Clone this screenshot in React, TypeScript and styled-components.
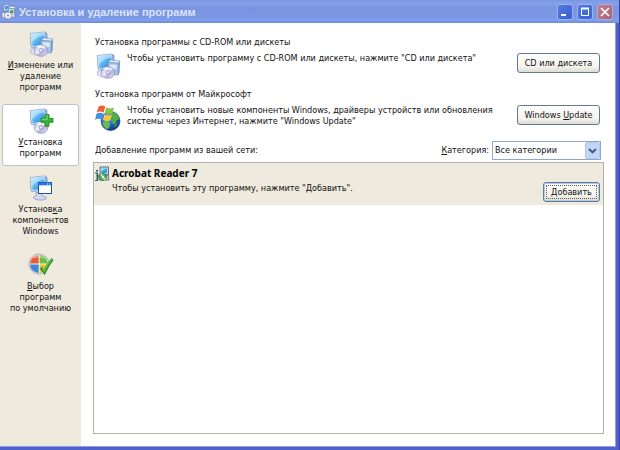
import React from "react";
import styled, { createGlobalStyle, css } from "styled-components";

const Global = createGlobalStyle`
  *, *::before, *::after { box-sizing: border-box; }
  html, body, #root { height: 100%; }
  body {
    margin: 0;
    background: #fff;
    color: #111;
    font: 9px/11px "DejaVu Sans Condensed", Tahoma, "DejaVu Sans", sans-serif;
  }
  button, select { font: inherit; color: inherit; }
  h1, h2, h3, p { margin: 0; font: inherit; }
  svg { display: block; flex: none; }
`;

const Window = styled.div`
  display: flex;
  flex-direction: column;
  height: 100%;
  background: #4f5fcb;
  border-right: 1px solid #3f3fa8;
`;

const TitleBar = styled.header`
  display: flex;
  align-items: center;
  gap: 3px;
  height: 23px;
  flex: none;
  padding: 0 6px 0 1px;
  background: linear-gradient(#7c96e0 0, #84a0ea 3px, #7a94e0 8px, #7b97e4 17px, #819fee 20px, #6f89d6 23px);
`;

const Title = styled.h1`
  flex: 1;
  color: #dbe5fb;
  font: bold 11px/16px "Liberation Sans", Arial, sans-serif;
  white-space: nowrap;
`;

const Controls = styled.div`
  display: flex;
  gap: 4px;
`;

const ControlButton = styled.button<{ $close?: boolean }>`
  display: grid;
  place-items: center;
  width: 16px;
  height: 16px;
  padding: 0;
  border: 1px solid ${(p) => (p.$close ? "#b9aad4" : "#9db4ef")};
  border-radius: 3px;
  background: ${(p) =>
    p.$close ? "linear-gradient(135deg, #bd8090, #a76273)" : "linear-gradient(135deg, #5579dc, #3560d6)"};
`;

const Body = styled.div`
  display: flex;
  flex: 1;
  min-height: 0;
  margin: 0 3px 3px 0;
  border: solid #8f9de2;
  border-width: 0 1px 1px 0;
  background: #fff;
`;

const Sidebar = styled.nav`
  display: flex;
  flex-direction: column;
  gap: 5px;
  width: 81px;
  flex: none;
  padding: 4px 2px;
  background: #eeeade;
`;

const NavButton = styled.button<{ $active?: boolean }>`
  display: flex;
  flex-direction: column;
  align-items: center;
  gap: 3px;
  min-height: 62px;
  padding: 3px 0 5px;
  border: 1px solid transparent;
  border-radius: 3px;
  background: none;
  white-space: pre-line;
  ${(p) =>
    p.$active &&
    css`
      border-color: #b9c4cf;
      background: #fff;
    `}
`;

const Content = styled.main`
  display: flex;
  flex-direction: column;
  flex: 1;
  min-width: 0;
  padding: 14px 11px 12px 12px;
`;

const Source = styled.section`
  display: flex;
  flex-direction: column;
  gap: 5px;
  min-height: 52px;
  padding: 0 4px 0 2px;
`;

const SourceRow = styled.div`
  display: flex;
  align-items: flex-start;
  gap: 6px;
`;

const SourceText = styled.p`
  flex: 1;
  white-space: pre-line;
`;

const PushButton = styled.button<{ $focused?: boolean }>`
  height: 20px;
  padding: 0 5px;
  border: 1px solid #5f7b95;
  border-radius: 3px;
  background: linear-gradient(#fff, #f4f3ee 70%, #dedbd0);
  white-space: nowrap;
  ${(p) =>
    p.$focused
      ? css`
          min-width: 57px;
          box-shadow: inset 0 0 0 1px #b5caec;
          outline: 1px dotted #5c5c5c;
          outline-offset: -4px;
        `
      : css`
          min-width: 83px;
        `}
`;

const Filter = styled.div`
  display: flex;
  align-items: center;
  gap: 3px;
  height: 19px;
  margin-bottom: 2px;
  padding: 0 3px 0 2px;
`;

const FilterTitle = styled.h2`
  flex: 1;
`;

const SelectBox = styled.div`
  display: grid;
  width: 109px;
  height: 19px;

  & > * {
    grid-area: 1 / 1;
  }
  & > svg {
    place-self: center end;
    margin-right: 1px;
    pointer-events: none;
  }
`;

const Select = styled.select`
  appearance: none;
  width: 100%;
  padding: 0 16px 0 2px;
  border: 1px solid #8fa9c8;
  border-radius: 0;
  background: #fff;
`;

const ProgramList = styled.ul`
  flex: 1;
  margin: 0;
  padding: 0;
  border: 1px solid #b4b1a8;
  list-style: none;
`;

const Program = styled.li`
  display: flex;
  align-items: flex-start;
  gap: 2px;
  min-height: 42px;
  padding: 3px 3px 3px 1px;
  background: #eeeade;
`;

const ProgramInfo = styled.div`
  display: flex;
  flex-direction: column;
  flex: 1;
  gap: 3px;
`;

const ProgramName = styled.h3`
  color: #000;
  font: bold 10px/14px "Noto Sans", Tahoma, sans-serif;
`;

const ProgramAction = styled.div`
  align-self: flex-end;
  display: flex;
`;

const Gradients = () => (
  <svg width="0" height="0" aria-hidden="true">
    <defs>
      <linearGradient id="screen" x1="0" y1="0" x2="1" y2="1">
        <stop offset="0" stopColor="#b9edff" />
        <stop offset=".5" stopColor="#59b2ee" />
        <stop offset="1" stopColor="#2d76cf" />
      </linearGradient>
      <linearGradient id="disc" x1="0" y1="0" x2="1" y2="1">
        <stop offset="0" stopColor="#9daee2" />
        <stop offset=".45" stopColor="#f3f1fc" />
        <stop offset=".6" stopColor="#b9b1e0" />
        <stop offset="1" stopColor="#e6e9fa" />
      </linearGradient>
      <radialGradient id="ocean" cx=".35" cy=".3" r=".8">
        <stop offset="0" stopColor="#62b7f2" />
        <stop offset=".5" stopColor="#2468c4" />
        <stop offset="1" stopColor="#0c3277" />
      </radialGradient>
    </defs>
  </svg>
);

const Monitor = () => (
  <>
    <path d="M2 2.5 17 .8l2.300 1.300.9 12.600-16 2.200L2.600 15z" fill="#8aa5ce" />
    <path d="M2 2.500 17 .8l.9 13.500L3.500 16.500z" fill="#d9e9f8" stroke="#7e9cc6" strokeWidth=".5" />
    <path d="M3.300 3.600 16.200 2.100l.7 11.200-12.400 2z" fill="url(#screen)" />
    <path d="M3.300 3.600 16.200 2.100l.2 2.600C10.500 5 7 8 3.900 11.500z" fill="#d5f5ff" opacity=".5" />
  </>
);

const Disc = () => (
  <>
    <ellipse cx="13" cy="19.500" rx="6.800" ry="5.800" fill="url(#disc)" stroke="#8387b8" strokeWidth=".7" />
    <path d="M13 19.500 8 15.500q2-1.700 5-1.700z" fill="#fff" opacity=".7" />
    <circle cx="13" cy="19.300" r="2" fill="#c8c9e8" stroke="#8c8dbd" strokeWidth=".6" />
    <circle cx="13" cy="19.300" r=".8" fill="#fff" />
  </>
);

const SetupIcon = () => (
  <svg width="26" height="26" viewBox="0 0 26 26" aria-hidden="true">
    <Monitor />
    <path d="m2.500 18.500 4.500-1.500 4 2.500-3.500 5-5-3z" fill="#dfe5f3" stroke="#8d9cc0" strokeWidth=".6" />
    <path d="m13 9.500 2.500-2.500 9.500 1-1.500 2.200z" fill="#e7f2fc" stroke="#6d8fc4" strokeWidth=".6" />
    <path d="m13 9.500 10.500.7-.4 11.800-10-1z" fill="#a9c6ea" stroke="#6283bb" strokeWidth=".6" />
    <path d="m23.500 10.200 1.500-2.200-.5 11.500-1.400 2.500z" fill="#6f92c8" />
    <path d="m15 11.500 6.500.5v4l-6.500-.4z" fill="#dfeefb" />
    <Disc />
  </svg>
);

const TitleIcon = () => (
  <svg width="15" height="17" viewBox="0 0 15 17" aria-hidden="true">
    <path d="M2 2.500 7.500 1l1 6L3 8z" fill="#e9f4fb" stroke="#557aa8" strokeWidth=".6" />
    <path d="m3.200 3.300 3.800-.9.5 3.600-3.700.8z" fill="#4aa0dc" />
    <path d="m7.500 5 2-2 5 1-1 2z" fill="#f8fbff" stroke="#56739f" strokeWidth=".5" />
    <path d="m7.500 5 6 1 .5 8.500-7-1z" fill="#d8e5ee" stroke="#56739f" strokeWidth=".6" />
    <path d="m9 7 3.500.6v3L9 10z" fill="#4e9a72" />
    <path d="M1 9.500h4l1 3-3 2.500-2-1z" fill="#e5e8ec" stroke="#66738f" strokeWidth=".5" />
    <ellipse cx="7" cy="12.500" rx="3.800" ry="3.500" fill="#eef0fb" stroke="#6c7098" strokeWidth=".6" />
    <circle cx="7" cy="12.500" r="1.100" fill="#8990bc" />
  </svg>
);

const AddIcon = () => (
  <svg width="26" height="26" viewBox="0 0 26 26" aria-hidden="true">
    <Monitor />
    <Disc />
    <path d="M17 6.500h4v3.800h4v4h-4v4h-4v-4h-4v-4h4z" fill="#35b637" stroke="#16801f" strokeWidth=".8" />
    <path d="M17.800 7.300h1.400v4h-5.400" fill="none" stroke="#8be07c" strokeWidth=".9" />
  </svg>
);

const ComponentsIcon = () => (
  <svg width="26" height="26" viewBox="0 0 26 26" aria-hidden="true">
    <Monitor />
    <path d="M8 17.500h5l.8 3.200 4.200 1.500q1.500 2-3 2.800-7 .5-9.500-2-.5-1.500 2.800-2.300z" fill="#d4d8ef" stroke="#858fbd" strokeWidth=".7" />
    <rect x="10.500" y="7.500" width="13" height="11" fill="#fff" stroke="#1552b7" />
    <rect x="10.500" y="7.500" width="13" height="2.800" fill="#2b73dc" />
    <path d="M19 9h1m1 0h1" stroke="#fff" />
  </svg>
);

const DefaultsIcon = () => (
  <svg width="26" height="26" viewBox="0 0 26 26" aria-hidden="true">
    <circle cx="11" cy="12" r="10" fill="#f4f2f0" stroke="#9d9da8" strokeWidth=".8" />
    <path d="M10.700 3v8.500H2A9 9 0 0 1 10.700 3z" fill="#ec5b32" />
    <path d="M11.700 3A9 9 0 0 1 20 11.500h-8.300z" fill="#6abf42" />
    <path d="M2 12.500h8.700V21A9 9 0 0 1 2 12.500z" fill="#3c86dc" />
    <path d="M11.700 12.500H20A9 9 0 0 1 11.700 21z" fill="#f6c51e" />
    <path d="M3 7q7-8 15 0-8-3-15 0z" fill="#fff" opacity=".35" />
    <path d="m13 15.500 3.500 4.800Q19.500 13 24.500 7" fill="none" stroke="#2c8d28" strokeWidth="3" />
    <path d="m13.300 15 3.200 4.200Q19.500 12 24 7" fill="none" stroke="#62c44d" strokeWidth="1.300" />
  </svg>
);

const UpdateIcon = () => (
  <svg width="26" height="26" viewBox="0 0 26 26" aria-hidden="true">
    <circle cx="15.500" cy="16" r="9.500" fill="url(#ocean)" stroke="#173b77" strokeWidth=".6" />
    <path d="M17 8q4-1.500 6 2l1.500 4-3 1.500-1.500 4-2.500-1-1-4-1-2z" fill="#4fac48" />
    <path d="m8 17 4-1 3 2.500-1 4.500-2 1.300Q8 22 7.500 18z" fill="#69bb52" />
    <path d="m20 19 3-1q-1 3.500-4 5z" fill="#398f42" />
    <path d="M3.500 1.800Q7 -.7 10.300 1.800L8.700 7.700Q5.500 5.500 1.800 7.500z" fill="#ef6035" />
    <path d="M11.300 2.200q3.500 2.300 7.700.2l-1.700 6q-4 2-7.500-.3z" fill="#83c643" />
    <path d="M1.500 8.700q3.500-2 7 0l-1.500 6q-3.500-2-7 0z" fill="#4290e5" />
    <path d="M9.500 9.200q3.500 2.200 7.500.3l-1.700 5.800q-3.500 2-7.400-.2z" fill="#fbca2f" />
  </svg>
);

const InstallerIcon = () => (
  <svg width="15" height="16" viewBox="0 0 15 16" aria-hidden="true">
    <path d="M5 1h8.500v8H5z" fill="#c9d4e2" stroke="#5d7080" />
    <path d="M6.500 2.500h5.500v4.500H6.500z" fill="#2e9fe0" />
    <path d="M6.500 2.500h5L6.500 5z" fill="#a5e5fc" />
    <path d="M3.500 9H13l1 5H4z" fill="#d7d5cd" stroke="#555e60" strokeWidth=".8" />
    <path d="M1 4h2v1.500H1zM0 6.500h3V15H0v-1h1.500V7.500H0z" fill="#345c5c" />
    <circle cx="8" cy="11" r="3.600" fill="#53b45d" stroke="#1f6d3c" strokeWidth=".7" />
    <path d="m8 11-3-2 2-1.500zm0 0 3 2-2 1.500z" fill="#c8efb9" />
    <circle cx="8" cy="11" r="1.200" fill="#fff" />
  </svg>
);

const Arrow = () => (
  <svg width="15" height="17" viewBox="0 0 15 17" aria-hidden="true">
    <rect x=".5" y=".5" width="14" height="16" rx="1.500" fill="#c4d5fa" stroke="#b3c7ee" />
    <path d="m4 7 3.500 3.300L11 7" fill="none" stroke="#46597e" strokeWidth="2" />
  </svg>
);

const navItems = [
  { icon: <SetupIcon />, label: <><u>И</u>зменение или{"\n"}удаление{"\n"}программ</> },
  { icon: <AddIcon />, label: <><u>У</u>становка{"\n"}программ</>, active: true },
  { icon: <ComponentsIcon />, label: <>Установ<u>к</u>а{"\n"}компонентов{"\n"}Windows</> },
  { icon: <DefaultsIcon />, label: <><u>В</u>ыбор{"\n"}программ{"\n"}по умолчанию</> },
];

const sources = [
  {
    title: "Установка программы с CD-ROM или дискеты",
    icon: <SetupIcon />,
    text: 'Чтобы установить программу с CD-ROM или дискеты, нажмите "CD или дискета"',
    action: <>CD или <u>д</u>искета</>,
  },
  {
    title: "Установка программ от Майкрософт",
    icon: <UpdateIcon />,
    text: 'Чтобы установить новые компоненты Windows, драйверы устройств или обновления\nсистемы через Интернет, нажмите "Windows Update"',
    action: <>Windows <u>U</u>pdate</>,
  },
];

export default function App() {
  return (
    <>
      <Global />
      <Window>
        <TitleBar>
          <TitleIcon />
          <Title>Установка и удаление программ</Title>
          <Controls>
            <ControlButton aria-label="Свернуть">
              <svg width="10" height="10"><path d="M1 8h5" stroke="#fff" strokeWidth="2" /></svg>
            </ControlButton>
            <ControlButton aria-label="Развернуть">
              <svg width="10" height="10">
                <path d="M1 1.500h8" stroke="#fff" strokeWidth="2" />
                <path d="M1.500 2v6.500h7V2" fill="none" stroke="#fff" />
              </svg>
            </ControlButton>
            <ControlButton $close aria-label="Закрыть">
              <svg width="10" height="10"><path d="m1 1 8 8m0-8-8 8" stroke="#fff" strokeWidth="1.700" /></svg>
            </ControlButton>
          </Controls>
        </TitleBar>
        <Body>
          <Sidebar>
            {navItems.map((item, i) => (
              <NavButton key={i} $active={item.active} aria-current={item.active ? "page" : undefined}>
                {item.icon}
                <span>{item.label}</span>
              </NavButton>
            ))}
          </Sidebar>
          <Content>
            {sources.map((s) => (
              <Source key={s.title}>
                <h2>{s.title}</h2>
                <SourceRow>
                  {s.icon}
                  <SourceText>{s.text}</SourceText>
                  <PushButton>{s.action}</PushButton>
                </SourceRow>
              </Source>
            ))}
            <Filter>
              <FilterTitle>Добавление программ из вашей сети:</FilterTitle>
              <label htmlFor="category"><u>К</u>атегория:</label>
              <SelectBox>
                <Select id="category" defaultValue="all">
                  <option value="all">Все категории</option>
                </Select>
                <Arrow />
              </SelectBox>
            </Filter>
            <ProgramList>
              <Program>
                <InstallerIcon />
                <ProgramInfo>
                  <ProgramName>Acrobat Reader 7</ProgramName>
                  <p>Чтобы установить эту программу, нажмите "Добавить".</p>
                </ProgramInfo>
                <ProgramAction>
                  <PushButton $focused>Добавить</PushButton>
                </ProgramAction>
              </Program>
            </ProgramList>
          </Content>
        </Body>
      </Window>
      <Gradients />
    </>
  );
}
